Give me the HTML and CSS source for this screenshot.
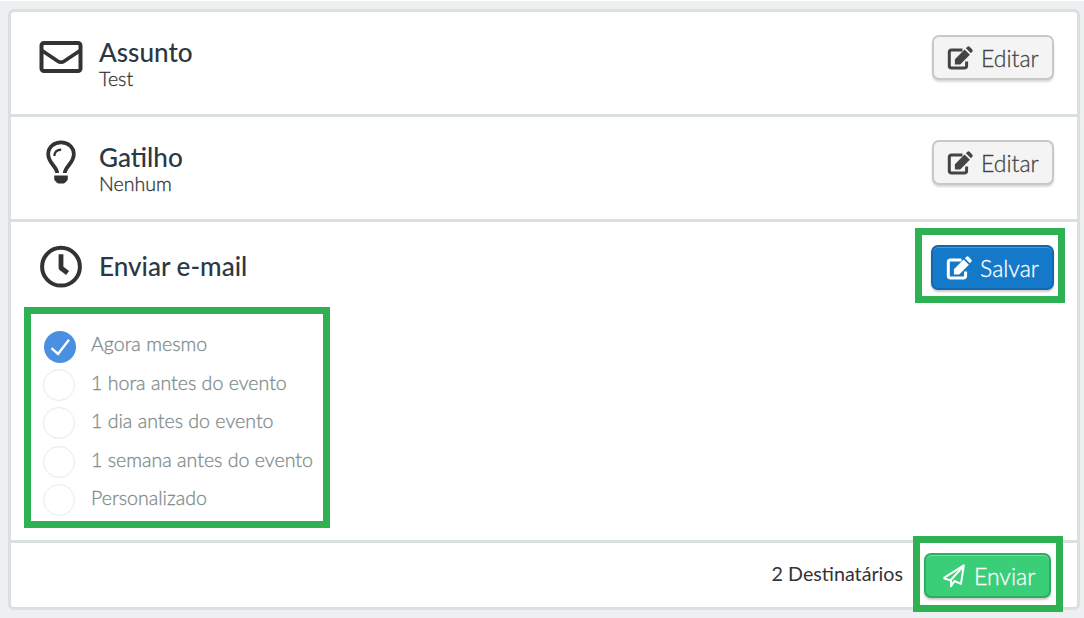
FILE: index.html
```html
<!DOCTYPE html>
<html lang="pt-BR">

<head>
    <meta charset="UTF-8">
    <title>Enviar e-mail</title>
    <link rel="stylesheet" href="styles.css">
</head>

<body>
    <!-- shared icon -->
    <svg class="sprite" width="0" height="0">
        <symbol id="edit" viewBox="0 0 26 24">
            <path d="M15.5 4H4.6Q2.3 4 2.3 6.3V19.7Q2.3 22 4.6 22H17.3Q19.6 22 19.6 19.7V15.5" fill="none" stroke="currentColor" stroke-width="3" />
            <path d="M7.9 18.5V13.2L17.6 3.5L22.9 8.8L13.2 18.5Z M18.9 2.3L20.4 .8Q21.5-.2 22.6.8L25.2 3.6Q26.2 4.7 25.2 5.8L23.9 7.3Z" fill="currentColor" />
        </symbol>
    </svg>

    <div class="card">
        <section class="row">
            <svg class="row-icon" viewBox="0 0 44 44" fill="none" stroke="#333" stroke-width="4">
                <rect x="2.5" y="8" width="39" height="28" rx="2.5" />
                <path d="M2.5 15.2L18.5 26Q22 28.4 25.5 26L41.5 15.2" stroke-width="3.6" />
            </svg>
            <div class="row-text">
                <h2>Assunto</h2>
                <p>Test</p>
            </div>
            <button class="btn btn-edit">
                <svg class="edit-icon"><use href="#edit" /></svg>
                <span>Editar</span>
            </button>
        </section>

        <section class="row">
            <svg class="row-icon" viewBox="0 0 44 44">
                <path d="M18.2 33C17.8 26.5 9.2 23 9.2 14.2C9.2 6.9 15 2.4 22 2.4S34.8 6.9 34.8 14.2C34.8 23 26.2 26.5 25.8 33" fill="none" stroke="#333" stroke-width="3.8" />
                <path d="M15.4 16C15.5 12 18 9.7 22.2 9.6" fill="none" stroke="#333" stroke-width="2.2" />
                <path d="M15.2 35.5H28.8V38.7Q28.8 39.8 28 40.7L26.4 42.6Q25.7 43.4 24.6 43.4H19.4Q18.3 43.4 17.6 42.6L16 40.7Q15.2 39.8 15.2 38.7Z" fill="#333" />
            </svg>
            <div class="row-text">
                <h2>Gatilho</h2>
                <p>Nenhum</p>
            </div>
            <button class="btn btn-edit">
                <svg class="edit-icon"><use href="#edit" /></svg>
                <span>Editar</span>
            </button>
        </section>

        <section class="schedule">
            <div class="schedule-head">
                <svg class="row-icon" viewBox="0 0 44 44" fill="none" stroke="#333">
                    <circle cx="22" cy="21.7" r="18.9" stroke-width="4" />
                    <path d="M22 9.2V23L28.6 28" stroke-width="4.8" stroke-linejoin="round" />
                </svg>
                <h2>Enviar e-mail</h2>
                <div class="highlight highlight-save">
                    <button class="btn btn-save">
                        <svg class="edit-icon"><use href="#edit" /></svg>
                        <span>Salvar</span>
                    </button>
                </div>
            </div>

            <ul class="options">
                <li>
                    <span class="radio checked">
                        <svg viewBox="0 0 32 32"><path d="M7.5 17.2L14 23L25 8.8" fill="none" stroke="#fff" stroke-width="2.4" /></svg>
                    </span>
                    <span class="label">Agora mesmo</span>
                </li>
                <li><span class="radio"></span><span class="label">1 hora antes do evento</span></li>
                <li><span class="radio"></span><span class="label">1 dia antes do evento</span></li>
                <li><span class="radio"></span><span class="label">1 semana antes do evento</span></li>
                <li><span class="radio"></span><span class="label">Personalizado</span></li>
            </ul>
        </section>

        <footer class="footer">
            <span class="recipients">2 Destinatários</span>
            <div class="highlight highlight-send">
                <button class="btn btn-send">
                    <svg class="send-icon" viewBox="0 0 24 24" fill="none" stroke="#fff" stroke-width="2" stroke-linejoin="round">
                        <path d="M1.6 14.2L21.8 1.4L19 19.8L12.4 17L9 22.2V15.8L20.4 3.4M1.6 14.2L8.6 16.4" />
                    </svg>
                    <span>Enviar</span>
                </button>
            </div>
        </footer>
    </div>
</body>

</html>
```
FILE: styles.css
```css
* {
    box-sizing: border-box;
}

body {
    margin: 0;
    padding: 8px 4px 8px 8px;
    border-top: 1px solid #fff;
    height: 618px;
    font-family: Lato, sans-serif;
    background-color: #ecf0f1;
    color: #333;
    overflow: hidden;
}

.sprite {
    display: block;
}

.card {
    height: 601px;
    border: 3px solid #dadfe0;
    border-radius: 6px;
    background-color: #fff;
}

.row {
    display: flex;
    height: 105px;
    padding: 23px 23px 0 28px;
    border-bottom: 3px solid #dadfe0;
}

.row-icon {
    flex: none;
    width: 44px;
    height: 44px;
}

.row-text {
    flex: 1;
    margin-left: 16px;
}

h2 {
    margin: 0;
    font-size: 26.1px;
    line-height: 34px;
    font-weight: 500;
    color: #2c3744;
}

.row-text p {
    margin: 0;
    font-size: 19.6px;
    line-height: 20px;
    font-weight: 300;
    -webkit-text-stroke: 0.3px;
}

/* buttons */
.btn {
    display: flex;
    align-items: center;
    height: 45px;
    padding: 0 13px;
    border: 2px solid #c8c8c8;
    border-radius: 7px;
    font-family: inherit;
    font-size: 23px;
    font-weight: 300;
    -webkit-text-stroke: 0.3px;
    white-space: nowrap;
    box-shadow: 0 2px 2px rgba(0, 0, 0, 0.15);
    cursor: pointer;
}

.btn span {
    padding-top: 1px;
}

.btn-edit {
    width: 122px;
    background-color: #f4f4f4;
    color: #444;
}

.edit-icon {
    flex: none;
    width: 26px;
    height: 24px;
    margin-right: 8px;
}

.btn-save {
    width: 123px;
    border-color: #1268ae;
    background-color: #1479c9;
    color: #fff;
    box-shadow: inset 0 1px 0 #4c9ad6, 0 2px 2px rgba(0, 0, 0, 0.2);
}

.btn-send {
    width: 127px;
    padding: 0 16px;
    border-color: #2eac60;
    background-color: #3bce78;
    color: #fff;
    box-shadow: inset 0 1px 0 #75dda0, 0 2px 2px rgba(0, 0, 0, 0.2);
}

.send-icon {
    flex: none;
    width: 24px;
    height: 24px;
    margin-right: 8px;
}

/* green frames around the buttons */
.highlight {
    position: relative;
    align-self: flex-start;
}

.highlight::after {
    content: '';
    position: absolute;
    border: 7px solid #2eb153;
    pointer-events: none;
}

.highlight-save::after {
    inset: -17px -11px -13px -16px;
}

.highlight-send::after {
    inset: -17px -12px -14px -11px;
}

.schedule {
    height: 321px;
    border-bottom: 3px solid #dadfe0;
}

.schedule-head {
    display: flex;
    height: 85px;
    padding: 23px 23px 0 28px;
}

.schedule-head h2 {
    flex: 1;
    margin: 4px 0 0 16px;
}

.options {
    width: 306px;
    height: 221px;
    margin: 0 0 0 13px;
    padding: 17px 0 0 12px;
    border: 7px solid #2eb153;
    list-style: none;
}

.options li {
    display: flex;
    height: 38.5px;
}

.radio {
    flex: none;
    width: 32px;
    height: 32px;
    margin-top: -1px;
    border: 1.5px solid #e6ebec;
    border-radius: 50%;
}

.radio.checked {
    margin: 0 -1px 0 1px;
    border: none;
    background-color: #4a90e2;
}

.radio svg {
    display: block;
}

.label {
    margin-left: 16px;
    font-size: 19.6px;
    line-height: 25px;
    font-weight: 300;
    -webkit-text-stroke: 0.3px;
    color: #7f8c8d;
}

.footer {
    display: flex;
    justify-content: flex-end;
    padding: 10px 26px 0 0;
}

.recipients {
    margin-right: 21px;
    font-size: 19.7px;
    line-height: 42px;
}
```
